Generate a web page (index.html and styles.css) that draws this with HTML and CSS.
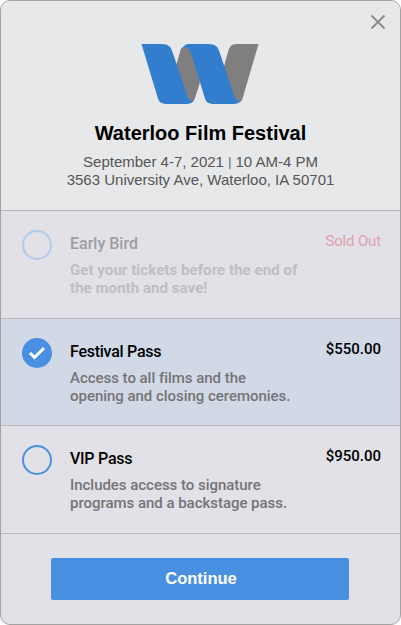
FILE: index.html
```html
<!DOCTYPE html>
<html lang="en">
<head>
    <meta charset="UTF-8">
    <meta name="viewport" content="width=device-width, initial-scale=1.0">
    <title>Waterloo Film Festival</title>
    <link rel="stylesheet" href="styles.css">
</head>
<body>

<div class="modal">
    <header class="event">
        <button class="close" aria-label="Close">
            <svg width="16" height="16" viewBox="0 0 16 16"><path d="M1.500 1.500L14.500 14.500M14.500 1.500L1.500 14.500"/></svg>
        </button>
        <svg class="logo" width="118" height="62" viewBox="0 0 118 62">
            <path class="logo-gray" d="M42 4L50 2L62 20L58.500 41L54 55C53 58 51 60 48 60L37 56L29 44L35.500 21L39 9C39.500 7 40 5 42 4Z"/>
            <path class="logo-gray" d="M117.500 1H96C90 1 88.500 4 87 9L80 34L87 60H95C99 60 101 58 102 54Z"/>
            <path class="logo-blue" d="M0.500 1H20C28 1 30 4 31.500 9L46 52C47.500 57 50 59 53 57C51 60 49 61 45 61H26C20 61 18 59 16.500 54Z"/>
            <path class="logo-blue" d="M41 6C43 2 45 1 49 1H67C75 1 77 4 78.500 9L93 52C94.500 57 97 59 100 57C98 60 96 61 92 61H73C67 61 65 59 63.500 54L50 10C48 5 45 3 41 6Z"/>
        </svg>
        <h1>Waterloo Film Festival</h1>
        <p class="date">September 4-7, 2021 <span class="divider">|</span> 10 AM-4 PM</p>
        <p class="address">3563 University Ave, Waterloo, IA 50701</p>
    </header>

    <div class="ticket sold-out">
        <span class="radio"></span>
        <div class="info">
            <h2>Early Bird</h2>
            <p>Get your tickets before the end of<br>the month and save!</p>
        </div>
        <span class="price">Sold Out</span>
    </div>

    <div class="ticket selected">
        <span class="radio">
            <svg width="18" height="14" viewBox="0 0 18 14"><path d="M2 7L6.500 11.500L16 2"/></svg>
        </span>
        <div class="info">
            <h2>Festival Pass</h2>
            <p>Access to all films and the<br>opening and closing ceremonies.</p>
        </div>
        <span class="price">$550.00</span>
    </div>

    <div class="ticket">
        <span class="radio"></span>
        <div class="info">
            <h2>VIP Pass</h2>
            <p>Includes access to signature<br>programs and a backstage pass.</p>
        </div>
        <span class="price">$950.00</span>
    </div>

    <footer class="actions">
        <button class="continue">Continue</button>
    </footer>
</div>

</body>
</html>
```
FILE: styles.css
```css
* {
    box-sizing: border-box;
}

body {
    margin: 0;
    background-color: #fff;
    font-family: Roboto, "Liberation Sans", sans-serif;
}

h1, h2, p {
    margin: 0;
}

.modal {
    width: 401px;
    height: 625px;
    display: flex;
    flex-direction: column;
    background-color: #e2e1e7;
    border: 1px solid #a3a3a3;
    border-radius: 10px;
    overflow: hidden;
}

.event {
    position: relative;
    height: 210px;
    padding-top: 42px;
    background-color: #e7e8ea;
    border-bottom: 1px solid #b3b3b5;
    font-family: "Liberation Sans", Arial, sans-serif;
    text-align: center;
}

.close {
    position: absolute;
    top: 13px;
    right: 14px;
    width: 16px;
    height: 16px;
    padding: 0;
    border: none;
    background: none;
    cursor: pointer;
}

.close svg {
    display: block;
    fill: none;
    stroke: #8d8d8f;
    stroke-width: 2;
}

.logo {
    display: block;
    margin: 0 auto 0 139.5px;
}

.logo-blue {
    fill: #327dcd;
}

.logo-gray {
    fill: #7f7f7f;
}

.event h1 {
    margin-top: 16px;
    font-size: 20px;
    line-height: 24px;
}

.event p {
    color: #555;
    font-size: 15px;
    line-height: 18px;
}

.event .date {
    margin-top: 8px;
}

.divider {
    font-size: 12px;
    vertical-align: 1px;
}

.ticket {
    display: flex;
    height: 107.5px;
    padding: 19px 19px 0 21px;
    border-bottom: 1px solid #b9b9be;
}

.radio {
    flex: none;
    display: flex;
    align-items: center;
    justify-content: center;
    width: 30px;
    height: 30px;
    border: 2px solid #4a90e2;
    border-radius: 50%;
}

.info {
    flex: 1;
    margin-left: 18px;
    padding-top: 4px;
}

.info h2 {
    font-size: 16px;
    font-weight: 500;
    letter-spacing: -0.25px;
    line-height: 20px;
}

.info p {
    margin-top: 7px;
    color: #747476;
    font-size: 15px;
    font-weight: 500;
    letter-spacing: -0.03px;
    line-height: 18px;
    white-space: nowrap;
}

.price {
    padding-top: 1px;
    font-size: 15px;
    font-weight: 500;
    line-height: 21px;
}

.selected {
    background-color: #d1d9e7;
}

.selected .radio {
    background-color: #4a90e2;
}

.selected .radio svg {
    fill: none;
    stroke: #fff;
    stroke-width: 3;
}

.sold-out .radio {
    border-color: #b1cbea;
}

.sold-out h2 {
    color: #9e9da1;
    letter-spacing: 0;
}

.sold-out .info p {
    color: #bfbec4;
    font-weight: 700;
    letter-spacing: 0.06px;
}

.sold-out .price {
    color: #e2a0af;
    font-weight: 400;
    letter-spacing: -0.15px;
}

.actions {
    flex: 1;
    padding: 24px 50px 0;
}

.continue {
    width: 298px;
    height: 42px;
    padding: 0 0 0 2px;
    border: none;
    border-radius: 2px;
    background-color: #4a90e2;
    color: #fff;
    font-family: "Liberation Sans", Arial, sans-serif;
    font-size: 16.5px;
    font-weight: bold;
    cursor: pointer;
}
```
